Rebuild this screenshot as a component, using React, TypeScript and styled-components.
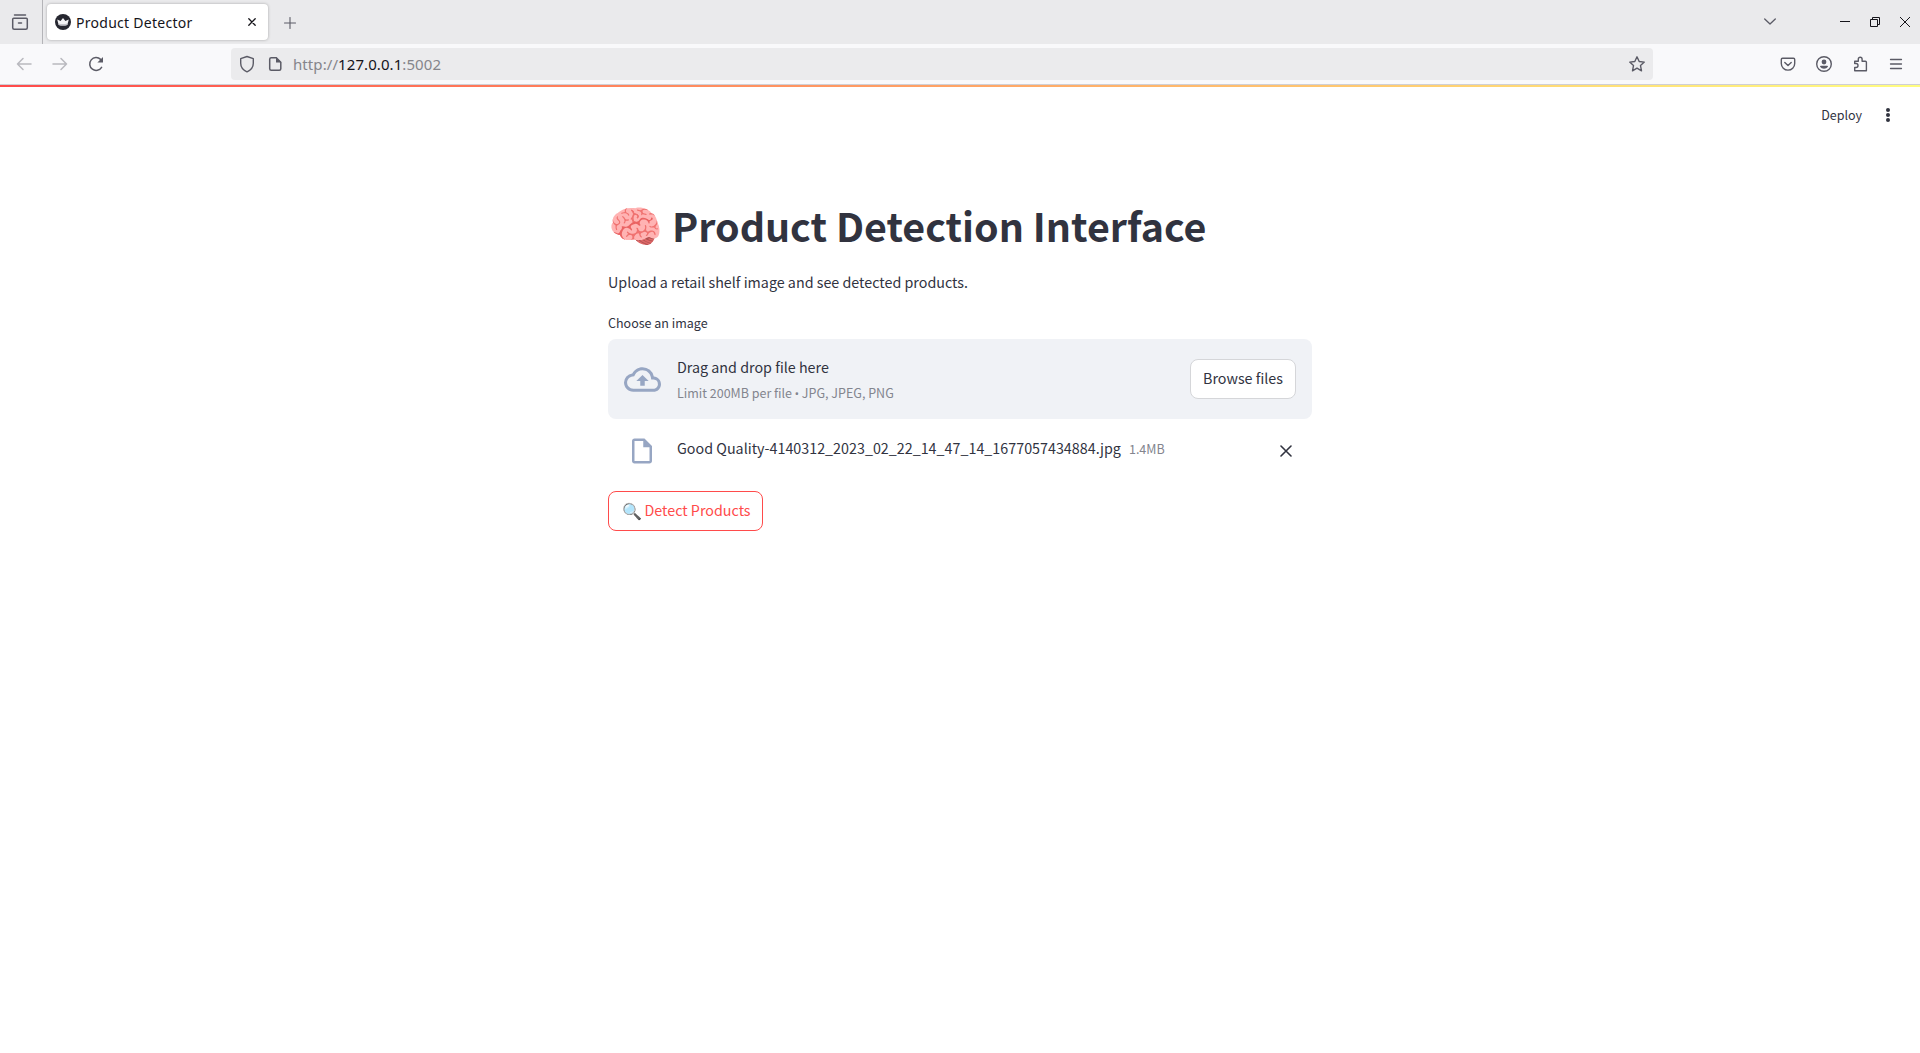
import React from 'react';
import styled, { createGlobalStyle } from 'styled-components';

const GlobalStyle = createGlobalStyle`
  * { box-sizing: border-box; }
  body { margin: 0; background: #fff; }
  button { font: inherit; margin: 0; padding: 0; border: 0; background: none; color: inherit; }
`;

const sans = `"Noto Sans CJK SC", "Noto Sans", sans-serif`;
const chrome = `"Noto Sans", "Open Sans", sans-serif`;

const Window = styled.div`
  display: flex;
  flex-direction: column;
  width: 1920px;
  height: 1053px;
  overflow: hidden;
  background: #fff;
`;

const TabStrip = styled.div`
  display: flex;
  align-items: center;
  height: 44px;
  background: #eaeaec;
  color: #15141a;
  flex: none;
`;

const ViewButton = styled.button`
  display: flex;
  align-items: center;
  justify-content: center;
  width: 43px;
  height: 44px;
  padding-right: 3px;
  border-right: 1px solid #b4b4b8;
  color: #5b5b66;
`;

const Tab = styled.div`
  display: flex;
  align-items: center;
  width: 221px;
  height: 36px;
  margin-left: 4px;
  padding: 0 12px 0 8px;
  border-radius: 4px;
  background: #fff;
  box-shadow: 0 0 3px rgba(0, 0, 0, 0.3);
`;

const TabTitle = styled.span`
  flex: 1;
  margin-left: 5px;
  padding-top: 2px;
  font: 14px/20px ${chrome};
  letter-spacing: 0.27px;
  white-space: nowrap;
`;

const NewTab = styled.div`
  display: flex;
  margin-left: 16px;
  padding-top: 1px;
  color: #5b5b66;
`;

const WindowControls = styled.div`
  display: flex;
  align-items: center;
  margin-left: auto;
  padding-right: 10px;
`;

const Control = styled.button<{ $gap?: number }>`
  display: flex;
  margin-left: ${p => p.$gap ?? 0}px;
`;

const ListTabs = styled(Control)`
  color: #5b5b66;
`;

const Toolbar = styled.div`
  display: flex;
  align-items: center;
  height: 41px;
  padding-bottom: 1px;
  background: #f9f9fb;
  border-bottom: 1px solid #cfcfd5;
  color: #5b5b66;
  flex: none;
`;

const Navigation = styled.div`
  display: flex;
  gap: 20px;
  width: 231px;
  padding-left: 16px;
`;

const AddressBar = styled.div`
  display: flex;
  align-items: center;
  width: 1422px;
  height: 32px;
  padding: 0 6px 0 8px;
  border-radius: 4px;
  background: #ebebed;
`;

const Url = styled.span`
  flex: 1;
  margin-left: 8px;
  font: 15px/20px ${chrome};
  letter-spacing: 0.08px;
  color: #85858b;
  b { font-weight: 400; color: #15141a; }
`;

const Actions = styled.div`
  display: flex;
  gap: 16px;
  margin-left: auto;
  padding-right: 14px;
`;

const IconBox = styled.span<{ $faded?: boolean; $ml?: number }>`
  display: flex;
  align-items: center;
  justify-content: center;
  width: 20px;
  height: 20px;
  margin-left: ${p => p.$ml ?? 0}px;
  opacity: ${p => (p.$faded ? 0.4 : 1)};
`;

const Decoration = styled.div`
  height: 2px;
  background: linear-gradient(90deg, #ff4b4b, #fffd80);
  flex: none;
`;

const AppHeader = styled.header`
  display: flex;
  align-items: center;
  justify-content: flex-end;
  height: 58px;
  padding: 0 24px 2px 0;
  color: #31333f;
`;

const Deploy = styled.span`
  margin-right: 18px;
  font: 12.5px/20px ${sans};
`;

const Main = styled.main`
  display: flex;
  flex-direction: column;
  width: 704px;
  margin: 54px auto 0;
  font-family: ${sans};
  color: #31333f;
`;

const Title = styled.h1`
  display: flex;
  align-items: center;
  margin: 0;
  height: 52px;
  font: 700 39.4px/52px ${sans};
  white-space: nowrap;
`;

const Emoji = styled.span<{ $w: number; $size: number; $lift?: number }>`
  width: ${p => p.$w}px;
  flex: none;
  font-size: ${p => p.$size}px;
  padding-bottom: ${p => p.$lift ?? 0}px;
`;

const Intro = styled.p`
  margin: 19px 0 0;
  font-size: 14.3px;
  line-height: 24px;
`;

const Label = styled.label`
  margin-top: 19px;
  font-size: 12.5px;
  line-height: 20px;
`;

const Dropzone = styled.section`
  display: flex;
  align-items: center;
  height: 80px;
  margin-top: 6px;
  padding: 0 16px;
  border-radius: 8px;
  background: #f0f2f6;
`;

const Instructions = styled.div`
  display: flex;
  flex-direction: column;
  flex: 1;
  gap: 4px;
  margin-left: 16px;
`;

const Primary = styled.span`
  font-size: 14.3px;
  line-height: 24px;
  white-space: nowrap;
`;

const Secondary = styled.small`
  font-size: 12.5px;
  line-height: 20px;
  color: #83858e;
  white-space: nowrap;
`;

const Bullet = styled.span`
  font-family: Roboto, sans-serif;
  font-size: 12.5px;
`;

const Button = styled.button<{ $w: number; $primary?: boolean }>`
  display: flex;
  align-items: center;
  justify-content: center;
  width: ${p => p.$w}px;
  height: 40px;
  padding-bottom: 2px;
  border: 1px solid ${p => (p.$primary ? '#ff4b4b' : '#d5d6d9')};
  border-radius: 8px;
  background: #fff;
  color: ${p => (p.$primary ? '#ff4b4b' : '#31333f')};
  font: 14.3px/24px ${sans};
  white-space: nowrap;
`;

const FileRow = styled.div`
  display: flex;
  align-items: center;
  height: 40px;
  margin: 12px 0 20px;
  padding: 0 20px 0 19px;
`;

const FileName = styled.span`
  margin: 0 8px 6px 20px;
  font-size: 14.3px;
  line-height: 24px;
  letter-spacing: 0.01px;
`;

const FileSize = styled(Secondary)`
  flex: 1;
  margin-bottom: 4px;
`;

type LineProps = { d: string; size?: number; width?: number; box?: number };
const Line = ({ d, size = 20, width = 1.5, box = 20 }: LineProps) => (
  <svg width={size} height={size} viewBox={`0 0 ${box} ${box}`} fill="none" stroke="currentColor"
    strokeWidth={width} strokeLinecap="round" strokeLinejoin="round"><path d={d} /></svg>
);

const Crown = () => (
  <svg width="16" height="16" viewBox="0 0 16 16">
    <circle cx="8" cy="8" r="8" fill="#262730" />
    <path d="M2.2 5.4 5.6 7 8 4l2.4 3 3.4-1.6-1.5 5.6q-4.3 1-8.6 0z" fill="#f4f4f6" />
    <path d="M3.4 9.6q4.6 1 9.2 0l-.3 1.4q-4.3 1-8.6 0z" fill="#c4c4ca" />
  </svg>
);

const Account = () => (
  <svg width="16" height="16" viewBox="0 0 16 16">
    <circle cx="8" cy="8" r="7.3" fill="none" stroke="currentColor" strokeWidth="1.4" />
    <circle cx="8" cy="6" r="2.4" fill="currentColor" />
    <path d="M4.9 9.8h6.2q.9 0 .9.9-1.5 2-4 2t-4-2q0-.9.9-.9z" fill="currentColor" />
  </svg>
);

export default function App() {
  return (
    <Window>
      <GlobalStyle />
      <TabStrip>
        <ViewButton>
          <Line d="M4.5 3h11M3.7 6.2h12.6q1 0 1 1v8.6q0 1.5-1.5 1.5H4.2q-1.5 0-1.5-1.5V7.2q0-1 1-1zM8.5 11h3" />
        </ViewButton>
        <Tab>
          <Crown />
          <TabTitle>Product Detector</TabTitle>
          <Line d="M.8.8 7.2 7.2M7.2.8.8 7.2" size={8} box={8} width={1.3} />
        </Tab>
        <NewTab><Line d="M6 .5v11M.5 6h11" size={12} box={12} width={1.1} /></NewTab>
        <WindowControls>
          <ListTabs><Line d="m.7 3 5.3 5 5.3-5" size={12} box={12} width={1.3} /></ListTabs>
          <Control $gap={64}>
            <svg width="10" height="10" shapeRendering="crispEdges"><path d="M0 4h10v1H0z" fill="#15141a" /></svg>
          </Control>
          <Control $gap={20}>
            <svg width="10" height="10" fill="none" stroke="#15141a"><path d="M.5 2.5h7v7h-7zM2.5 2.5v-2h7v7h-2" /></svg>
          </Control>
          <Control $gap={20}>
            <svg width="10" height="10" stroke="#15141a"><path d="m0 0 10 10M10 0 0 10" /></svg>
          </Control>
        </WindowControls>
      </TabStrip>
      <Toolbar>
        <Navigation>
          <IconBox $faded $ml={-2}><Line d="M17 10H3.5M9 4.5 3.5 10 9 15.5" /></IconBox>
          <IconBox $faded $ml={-4}><Line d="M3 10h13.5M11 4.5 16.5 10 11 15.5" /></IconBox>
          <IconBox $ml={-4}>
            <svg width="20" height="20" viewBox="0 0 20 20">
              <path d="M15.6 13.3a6.4 6.4 0 1 1-1-7.9" fill="none" stroke="currentColor" strokeWidth="1.5" strokeLinecap="round" />
              <path d="M17 3v5.6h-5.6z" fill="currentColor" />
            </svg>
          </IconBox>
        </Navigation>
        <AddressBar>
          <IconBox $ml={-2}><Line d="M10 2.5 16.3 4.7v4.5c0 4-2.6 6.9-6.3 8.6-3.7-1.7-6.3-4.6-6.3-8.6V4.7z" width={1.4} /></IconBox>
          <IconBox $ml={8}>
            <svg width="20" height="20" viewBox="0 0 20 20">
              <path d="M11.3 3.7H6.2q-1.5 0-1.5 1.5v9.6q0 1.5 1.5 1.5h8.1q1.5 0 1.5-1.5V8.3z" fill="none" stroke="currentColor" strokeWidth="1.5" />
              <path d="M11 3.5v5h5.3z" fill="currentColor" />
            </svg>
          </IconBox>
          <Url>http://<b>127.0.0.1</b>:5002</Url>
          <IconBox><Line d="m10 2.8 2.2 4.7 5.1.6-3.8 3.5 1 5.2-4.5-2.6-4.5 2.6 1-5.2L2.7 8.1l5.1-.6z" width={1.4} /></IconBox>
        </AddressBar>
        <Actions>
          <IconBox><Line d="M4.5 4.2h11q1.2 0 1.2 1.2v4a6.7 6.7 0 0 1-13.4 0v-4q0-1.2 1.2-1.2zM6.8 8.5 10 11.6l3.2-3.1" width={1.4} /></IconBox>
          <IconBox><Account /></IconBox>
          <IconBox><Line d="M4.7 7.2h3.6v-2a1.9 1.9 0 0 1 3.8 0v2h3.3q1 0 1 1v8.5H4.700v-3.200h1.300a2 2 0 0 0 0-4H4.700z" width={1.4} /></IconBox>
          <IconBox><Line d="M4.5 5.5h11M4.5 10h11M4.5 14.5h11" width={1.3} /></IconBox>
        </Actions>
      </Toolbar>
      <Decoration />
      <AppHeader>
        <Deploy>Deploy</Deploy>
        <svg width="16" height="16" fill="#31333f"><circle cx="8" cy="3" r="2" /><circle cx="8" cy="8" r="2" /><circle cx="8" cy="13" r="2" /></svg>
      </AppHeader>
      <Main>
        <Title><Emoji $w={64} $size={44} $lift={4}>🧠</Emoji>Product Detection Interface</Title>
        <Intro>Upload a retail shelf image and see detected products.</Intro>
        <Label>Choose an image</Label>
        <Dropzone>
          <svg width="37" height="37" viewBox="0 0 24 24" fill="#97a6c3">
            <path d="M19.35 10.04A7.49 7.49 0 0 0 12 4C9.11 4 6.6 5.64 5.35 8.04A5.994 5.994 0 0 0 0 14c0 3.31 2.69 6 6 6h13c2.76 0 5-2.24 5-5 0-2.64-2.05-4.78-4.65-4.96zM19 18H6c-2.21 0-4-1.79-4-4 0-2.05 1.53-3.76 3.56-3.97l1.07-.11.5-.95A5.469 5.469 0 0 1 12 6c2.62 0 4.88 1.86 5.39 4.43l.3 1.5 1.53.11A2.98 2.98 0 0 1 22 15c0 1.65-1.35 3-3 3zM8 13h2.55v3h2.9v-3H16l-4-4z" />
          </svg>
          <Instructions>
            <Primary>Drag and drop file here</Primary>
            <Secondary>Limit 200MB per file <Bullet>•</Bullet> JPG, JPEG, PNG</Secondary>
          </Instructions>
          <Button $w={106}>Browse files</Button>
        </Dropzone>
        <FileRow>
          <svg width="30" height="30" viewBox="0 0 24 24" fill="#97a6c3">
            <path d="M14 2H6c-1.1 0-1.99.9-1.99 2L4 20c0 1.1.89 2 1.99 2H18c1.1 0 2-.9 2-2V8l-6-6zM6 20V4h7v5h5v11H6z" />
          </svg>
          <FileName>Good Quality-4140312_2023_02_22_14_47_14_1677057434884.jpg</FileName>
          <FileSize>1.4MB</FileSize>
          <Line d="m1 1 10 10M11 1 1 11" size={12} box={12} width={1.6} />
        </FileRow>
        <Button $w={155} $primary><Emoji $w={24} $size={16}>🔍</Emoji>Detect Products</Button>
      </Main>
    </Window>
  );
}
